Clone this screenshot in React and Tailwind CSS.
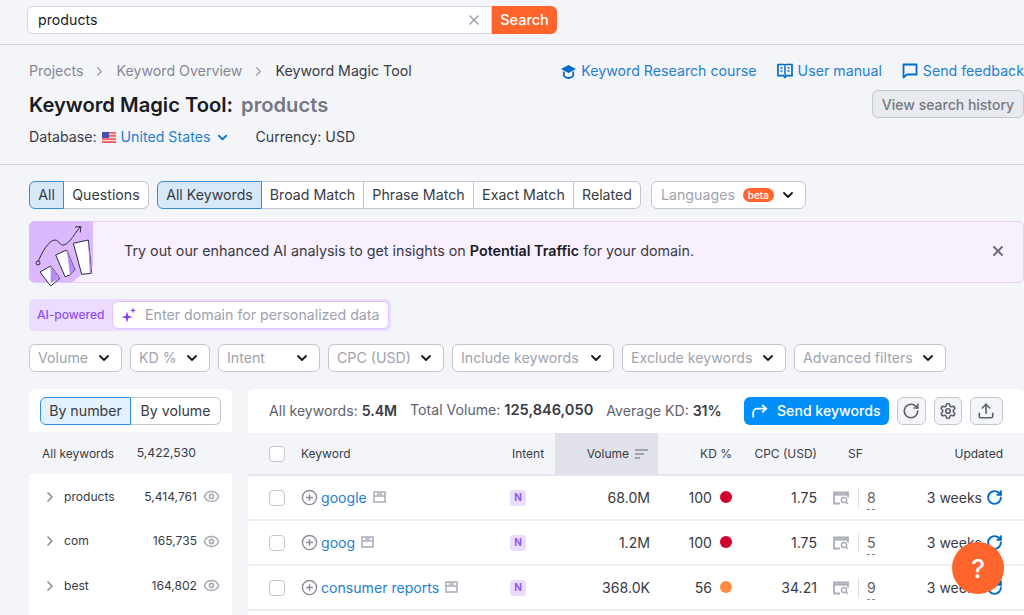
import { ChevronDown, ChevronRight, X, Eye, RotateCw, Settings, Upload, CirclePlus } from "lucide-react";

const rowGrid = "grid grid-cols-[32px_209px_45px_103px_74px_85px_73px_113px] pl-[21px] items-center";

const filters = [
  { label: "Volume", width: "w-[93px]" },
  { label: "KD %", width: "w-[80px]" },
  { label: "Intent", width: "w-[102px]" },
  { label: "CPC (USD)", width: "w-[116px]" },
  { label: "Include keywords", width: "w-[162px]" },
  { label: "Exclude keywords", width: "w-[164px]" },
  { label: "Advanced filters", width: "w-[152px]" },
];

const keywords = [
  { name: "google", volume: "68.0M", kd: "100", dot: "bg-[#d1002f]", cpc: "1.75", sf: "8" },
  { name: "goog", volume: "1.2M", kd: "100", dot: "bg-[#d1002f]", cpc: "1.75", sf: "5" },
  { name: "consumer reports", volume: "368.0K", kd: "56", dot: "bg-[#ff8c43]", cpc: "34.21", sf: "9" },
];

const groups = [
  { name: "products", count: "5,414,761" },
  { name: "com", count: "165,735" },
  { name: "best", count: "164,802" },
];

function Chevron() {
  return <ChevronDown size={16} strokeWidth={2.8} className="text-[#191b23] shrink-0" />;
}

function Flag() {
  return (
    <svg width="14" height="11" viewBox="0 0 14 11" className="shrink-0">
      <rect width="14" height="11" fill="#f2545b" />
      <rect y="1.6" width="14" height="1.5" fill="#fbd5d8" />
      <rect y="4.7" width="14" height="1.5" fill="#fbd5d8" />
      <rect y="7.8" width="14" height="1.5" fill="#fbd5d8" />
      <rect width="7" height="6" fill="#4a4fa8" />
    </svg>
  );
}

function CapIcon() {
  return (
    <svg width="17" height="15" viewBox="0 0 17 15" fill="none" className="shrink-0">
      <path d="M8.5 1 16 5l-7.5 4L1 5l7.5-4Z" fill="#006dca" />
      <path d="M3.8 7.5v4.3c1.2 1.5 2.9 2.2 4.7 2.2s3.5-.7 4.7-2.2V7.5" stroke="#006dca" strokeWidth="1.8" />
    </svg>
  );
}

function BookIcon() {
  return (
    <svg width="16" height="16" viewBox="0 0 16 16" fill="none" className="shrink-0">
      <path d="M1 1.5h5.8c.6 0 1.2.3 1.2 1 0-.7.6-1 1.2-1H15v11.2H9.5L8 14.500l-1.500-1.800H1V1.500Z" stroke="#006dca" strokeWidth="1.700" />
      <path d="M8 2.500v10M3.500 5h2M3.500 8h2M10.500 5h2M10.500 8h2" stroke="#006dca" strokeWidth="1.500" />
    </svg>
  );
}

function FeedbackIcon() {
  return (
    <svg width="16" height="16" viewBox="0 0 16 16" fill="none" className="shrink-0">
      <path d="M1.500 1.500h13v10H5L1.500 14.500v-13Z" stroke="#006dca" strokeWidth="1.800" strokeLinejoin="round" />
    </svg>
  );
}

function Sparkles() {
  return (
    <svg width="16" height="16" viewBox="0 0 16 16" className="shrink-0">
      <path d="M6 4.500 7.300 8.700 11.500 10 7.300 11.300 6 15.500 4.700 11.300.5 10l4.200-1.300L6 4.500Z" fill="#8e3ff0" />
      <path d="M12 .5l.8 2.200 2.200.8-2.200.8-.8 2.200-.8-2.200-2.200-.8 2.200-.8.8-2.200Z" fill="#8e3ff0" />
    </svg>
  );
}

function BannerArt() {
  return (
    <svg width="64" height="67" viewBox="0 0 64 67" fill="none" className="shrink-0 self-start -ml-[1px] -mt-[1px] -mb-[5px]">
      <path d="M0 6a6 6 0 0 1 6-6h58v44L43 61.500H6a6 6 0 0 1-6-6V6Z" fill="#dcb8ff" />
      <path d="M9 41c4-10 11-22 17-22 4 0 5 6 9 5 6-2 11-12 16-18" stroke="#2b2e38" strokeWidth="1" />
      <path d="M46 6l6-.5-.8 6" stroke="#2b2e38" strokeWidth="1" />
      <circle cx="9" cy="42" r="2" fill="#dcb8ff" stroke="#2b2e38" />
      <path d="M11 51l10.700-6L31 57.300 21.700 65 11 51Z" fill="#fff" stroke="#2b2e38" strokeLinejoin="round" />
      <path d="M21.700 45 31 57.300 21.700 62l0-17Z" fill="#b88cf5" />
      <path d="M26.700 34l11-5L46 49l-5 5-5 1.700-9.300-21.700Z" fill="#fff" stroke="#2b2e38" strokeLinejoin="round" />
      <path d="M37.700 29 46 49l-5 5-3.300-25Z" fill="#b88cf5" />
      <path d="M44.300 22.300 59.300 19l3.400 33.300-10 1-8.400-31Z" fill="#fff" stroke="#2b2e38" strokeLinejoin="round" />
      <path d="M59.300 19l3.400 33.300-2 .2L59.300 19Z" fill="#b88cf5" />
    </svg>
  );
}

function SortIcon() {
  return (
    <svg width="13" height="10" viewBox="0 0 13 10" fill="none" className="shrink-0">
      <path d="M0 1h13M0 5h9M0 9h5" stroke="#8b8e99" strokeWidth="1.500" />
    </svg>
  );
}

function SerpIcon() {
  return (
    <svg width="16" height="14" viewBox="0 0 16 14" fill="none" className="shrink-0">
      <path d="M7 12.500H1V1.500h14v5" stroke="#abaeb8" strokeWidth="1.800" />
      <path d="M1 3.500h14" stroke="#abaeb8" strokeWidth="2.200" />
      <circle cx="11" cy="9" r="2.600" stroke="#abaeb8" strokeWidth="1.500" />
      <path d="m13 11 2 2" stroke="#abaeb8" strokeWidth="1.500" />
    </svg>
  );
}

function CacheIcon() {
  return (
    <svg width="13" height="12" viewBox="0 0 13 12" fill="none" className="shrink-0">
      <rect x="1" y="1" width="11" height="10" stroke="#a9abb6" strokeWidth="1.500" />
      <path d="M1 5h11M4 3h5" stroke="#a9abb6" strokeWidth="1.500" />
    </svg>
  );
}

function SendIcon() {
  return (
    <svg width="16" height="14" viewBox="0 0 16 14" fill="none" className="shrink-0">
      <path d="M1.200 13.500V9c0-2.500 1.800-4.300 4.300-4.300H14" stroke="#fff" strokeWidth="1.800" />
      <path d="M10.200 1 14.200 4.700 10.200 8.400" stroke="#fff" strokeWidth="1.800" />
    </svg>
  );
}

function IconButton({ icon: Icon, width }) {
  return (
    <div className={`${width} h-7 flex items-center justify-center rounded-md border border-[#c4c7cf] bg-[#f4f5f9] text-[#5f626d]`}>
      <Icon size={18} strokeWidth={2.2} />
    </div>
  );
}

function Tab({ children, active, width, className = "" }) {
  return (
    <div
      className={`${width} h-7 pb-[1px] flex items-center justify-center text-[14.2px] text-[#383b45] ${
        active ? "bg-[#d7e9f9] border border-[#2f8fdc]" : "bg-white border-y border-r border-[#c4c7cf]"
      } ${className}`}
    >
      {children}
    </div>
  );
}

function Checkbox() {
  return <div className="w-4 h-4 rounded-[4px] border border-[#c4c7cf] bg-white" />;
}

function KeywordRow({ item }) {
  return (
    <div className={`${rowGrid} h-[45px] border-b-2 border-[#eceef3] text-[14.1px] text-[#383b45]`}>
      <Checkbox />
      <div className="flex items-center">
        <CirclePlus size={17} strokeWidth={2} className="text-[#8b8e99] shrink-0" />
        <span className="ml-[3px] text-[#1f7fd0]">{item.name}</span>
        <span className="ml-[6px]">
          <CacheIcon />
        </span>
      </div>
      <div className="w-4 h-4 rounded-[3px] bg-[#e9dcff] flex items-center justify-center text-[10px] font-bold text-[#8e5ae8]">N</div>
      <div className="text-right pr-[8px]">{item.volume}</div>
      <div className="flex items-center justify-end gap-2">
        {item.kd}
        <span className={`w-3 h-3 rounded-full ${item.dot}`} />
      </div>
      <div className="text-right">{item.cpc}</div>
      <div className="flex items-center pl-4">
        <SerpIcon />
        <span className="w-[1px] h-5 bg-[#dfe1e7] ml-[9px] mr-2" />
        <div className="flex flex-col items-center text-[#5f626d] leading-[18px] pt-[3px]">
          {item.sf}
          <span className="flex gap-[2px] mt-[2px]">
            <i className="w-[3px] h-[1px] bg-[#8b8e99]" />
            <i className="w-[3px] h-[1px] bg-[#8b8e99]" />
          </span>
        </div>
      </div>
      <div className="flex items-center justify-end gap-1 text-[14px]">
        3 weeks
        <RotateCw size={17} strokeWidth={2.800} className="text-[#006dca]" />
      </div>
    </div>
  );
}

export default function App() {
  return (
    <div className="relative h-[615px] overflow-hidden bg-[#f4f5f9] font-['Inter',sans-serif] text-[#191b23]">
      {/* search bar */}
      <div className="h-[45px] border-b border-[#d5d7dd] pl-[27px] pt-[6px]">
        <div className="flex w-[530px] h-7">
          <div className="flex-1 flex items-center justify-between bg-white border border-[#d5d7e0] rounded-l-md pl-[10px] pr-[9px] text-[14.2px]">
            products
            <X size={16} strokeWidth={2.2} className="text-[#9ea1ac]" />
          </div>
          <div className="w-[65px] flex items-center justify-center rounded-r-md bg-[#ff642d] text-white text-[14.5px] font-medium">Search</div>
        </div>
      </div>

      {/* page header */}
      <div className="h-[120px] border-b border-[#d5d7dd] pl-[29px] pt-[17px] flex justify-between">
        <div>
          <div className="flex items-center text-[14.2px] text-[#858893] h-[18px]">
            Projects
            <ChevronRight size={15} strokeWidth={2.2} className="mx-[9px] text-[#9ea1ac]" />
            Keyword Overview
            <ChevronRight size={15} strokeWidth={2.2} className="mx-[9px] text-[#9ea1ac]" />
            <span className="text-[#383b45]">Keyword Magic Tool</span>
          </div>
          <div className="mt-[13px] h-6 flex items-center text-[20.2px] font-semibold leading-6">
            Keyword Magic Tool:
            <span className="ml-2 text-[#767883]">products</span>
          </div>
          <div className="mt-[11px] flex items-center text-[14.2px] text-[#383b45] h-[18px]">
            Database:
            <span className="ml-[5px]">
              <Flag />
            </span>
            <span className="ml-[5px] text-[#1f7fd0]">United States</span>
            <ChevronDown size={15} strokeWidth={2.800} className="ml-[5px] text-[#006dca]" />
            <span className="ml-[25px]">Currency: USD</span>
          </div>
        </div>
        <div className="flex flex-col items-end">
          <div className="flex items-center h-[18px] text-[14.2px] text-[#1f7fd0]">
            <CapIcon />
            <span className="ml-1">Keyword Research course</span>
            <span className="ml-5">
              <BookIcon />
            </span>
            <span className="ml-[5px]">User manual</span>
            <span className="ml-5">
              <FeedbackIcon />
            </span>
            <span className="ml-[5px]">Send feedback</span>
          </div>
          <div className="mt-[10px] w-[152px] h-7 flex items-center justify-center rounded-md border border-[#c4c7cf] bg-[#e9eaef] text-[14px] font-medium text-[#767883]">
            View search history
          </div>
        </div>
      </div>

      <div className="pl-[29px] pt-4">
        {/* tabs */}
        <div className="flex items-center">
          <Tab active width="w-[35px]" className="rounded-l-md">All</Tab>
          <Tab width="w-[85px]" className="rounded-r-md">Questions</Tab>
          <Tab active width="w-[105px]" className="ml-[8px] rounded-l-md">All Keywords</Tab>
          <Tab width="w-[102px]">Broad Match</Tab>
          <Tab width="w-[110px]">Phrase Match</Tab>
          <Tab width="w-[100px]">Exact Match</Tab>
          <Tab width="w-[67px]" className="rounded-r-md">Related</Tab>
          <div className="ml-[10px] w-[155px] h-7 pb-[1px] flex items-center pl-[9px] pr-[9px] bg-white rounded-md border border-[#c4c7cf] text-[14.2px] text-[#a0a3ae]">
            Languages
            <span className="ml-[8px] w-[31px] h-[14px] rounded-full bg-[#ff642d] text-white text-[10px] font-medium leading-[14px] text-center">beta</span>
            <span className="ml-auto">
              <Chevron />
            </span>
          </div>
        </div>

        {/* AI banner */}
        <div className="mt-3 h-[62px] flex items-center rounded-md border border-[#e8d0ff] bg-[#f8f0ff]">
          <BannerArt />
          <div className="ml-[31px] pb-[3px] text-[14.3px] text-[#383b45]">
            Try out our enhanced AI analysis to get insights on <span className="font-semibold text-[#191b23]">Potential Traffic</span> for your domain.
          </div>
          <X size={16} strokeWidth={2.800} className="ml-auto mr-[17px] mb-[2px] text-[#6c6e79]" />
        </div>

        {/* domain input */}
        <div className="mt-4 w-[362px] h-8 flex items-center rounded-md bg-[#ecdcff] pl-2 pr-[2px]">
          <span className="w-[75px] text-[12px] font-medium text-[#8e4ff0]">AI-powered</span>
          <div className="flex-1 h-7 flex items-center rounded-md border border-[#e0c8ff] bg-white pl-2 text-[14.2px] text-[#a0a3ae]">
            <Sparkles />
            <span className="ml-2">Enter domain for personalized data</span>
          </div>
        </div>

        {/* filters */}
        <div className="mt-[13px] flex gap-[8px]">
          {filters.map((filter) => (
            <div
              key={filter.label}
              className={`${filter.width} h-7 pb-[1px] flex items-center justify-between pl-[8px] pr-[9px] bg-white rounded-md border border-[#c4c7cf] text-[14.2px] text-[#a0a3ae]`}
            >
              {filter.label}
              <Chevron />
            </div>
          ))}
        </div>

        {/* panels */}
        <div className="mt-[17px] flex gap-4">
          <div className="w-[203px] shrink-0 h-[240px] bg-white rounded-t-md">
            <div className="h-[43px] pt-[8px] pl-[11px] flex">
              <Tab active width="w-[91px]" className="rounded-l-md !bg-[#e3f1fc]">By number</Tab>
              <Tab width="w-[90px]" className="rounded-r-md">By volume</Tab>
            </div>
            <div className="h-[42px] pt-[1px] flex items-center justify-between pl-[13px] pr-[36px] bg-[#f4f5f9] text-[12px] text-[#383b45]">
              <span>All keywords</span>
              <span className="text-[12.200px]">5,422,530</span>
            </div>
            {groups.map((group) => (
              <div key={group.name} className="h-[44.500px] pt-[1px] flex items-center pl-[13px] pr-[12px] text-[12.100px] text-[#383b45]">
                <ChevronRight size={16} strokeWidth={2.500} className="text-[#8b8e99]" />
                <span className="ml-[6px]">{group.name}</span>
                <span className="ml-auto">{group.count}</span>
                <Eye size={17} strokeWidth={2.200} className="ml-[6px] text-[#a9abb6]" />
              </div>
            ))}
          </div>

          <div className="flex-1 bg-white rounded-t-md">
            <div className="h-[44px] flex items-center pl-[21px] pb-[1px] text-[14.1px] text-[#5f626d]">
              <span>All keywords: <b className="font-semibold text-[#383b45]">5.4M</b></span>
              <span className="ml-[13px]">Total Volume: <b className="text-[14.600px] font-semibold text-[#383b45]">125,846,050</b></span>
              <span className="ml-[13px]">Average KD: <b className="font-semibold text-[#383b45]">31%</b></span>
              <div className="ml-[22px] w-[145px] h-7 flex items-center justify-center gap-[9px] rounded-md bg-[#008ff8] text-white font-medium">
                <SendIcon />
                Send keywords
              </div>
              <div className="ml-2">
                <IconButton icon={RotateCw} width="w-[29px]" />
              </div>
              <div className="ml-2">
                <IconButton icon={Settings} width="w-7" />
              </div>
              <div className="ml-2">
                <IconButton icon={Upload} width="w-[33px]" />
              </div>
            </div>

            <div className={`${rowGrid} h-[43px] bg-[#f4f5f9] border-b-2 border-[#e6e7ec] text-[12px] text-[#383b45]`}>
              <Checkbox />
              <div>Keyword</div>
              <div className="pl-[2px]">Intent</div>
              <div className="h-full bg-[#e0e1e9] flex items-center justify-end gap-[6px] pr-[10px]">
                Volume
                <SortIcon />
              </div>
              <div className="text-right">KD %</div>
              <div className="text-right">CPC (USD)</div>
              <div className="pl-[31px]">SF</div>
              <div className="text-right">Updated</div>
            </div>

            {keywords.map((item) => (
              <KeywordRow key={item.name} item={item} />
            ))}
          </div>
        </div>
      </div>

      {/* help button */}
      <div className="absolute left-[952px] top-[542px] w-[52px] h-[52px] rounded-full bg-[#ff642d] flex items-center justify-center text-white text-[26px] font-medium">?</div>
    </div>
  );
}
